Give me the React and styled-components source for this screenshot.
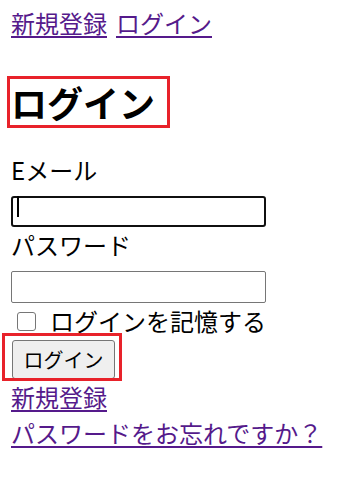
import React from "react"
import styled, { createGlobalStyle } from "styled-components"

const GlobalStyle = createGlobalStyle`
    body {
        margin: 0;
        background: #ffffff;
        color: #000000;
        font-family: "Noto Sans CJK JP", "Noto Sans", sans-serif;
        font-size: 24px;
        line-height: 36px;
    }
`

const Page = styled.div`
    padding: 5px 11px 20px;
`

const Nav = styled.div`
    display: flex;
    gap: 9px;
    height: 36px;
`

const Link = styled.a`
    color: #551a8b;
    text-decoration: underline;
    text-decoration-thickness: 2px;
    text-underline-offset: 3px;
    cursor: pointer;
`

// red annotation frame lies over the element, so it is drawn as an overlay
const Heading = styled.h1`
    position: relative;
    width: fit-content;
    margin: 38px 0 27px;
    font-size: 36px;
    line-height: 46px;
    font-weight: 700;

    &::after {
        content: "";
        position: absolute;
        left: -4px;
        top: -3px;
        right: -15px;
        bottom: -3px;
        border: 3px solid #e8222a;
    }
`

const Form = styled.form`
    display: flex;
    flex-direction: column;
    align-items: flex-start;
`

const Label = styled.label`
    display: block;
    height: 36px;
`

const InputWrap = styled.div`
    position: relative;
    margin-top: ${(p) => p.$top}px;
`

const Input = styled.input`
    box-sizing: border-box;
    width: 255px;
    height: ${(p) => (p.$focused ? 31 : 32)}px;
    margin: 0;
    padding: 0 6px;
    font: inherit;
    font-size: 20px;
    background: #ffffff;
    border: ${(p) => (p.$focused ? "2px solid #101010" : "1px solid #767676")};
    border-radius: ${(p) => (p.$focused ? 3 : 2)}px;
    outline: none;
    caret-color: transparent;
`

const Caret = styled.span`
    position: absolute;
    left: 6px;
    top: 5px;
    width: 2px;
    height: 21px;
    background: #000000;
`

const CheckRow = styled.label`
    display: flex;
    align-items: center;
    height: 36px;
`

const Check = styled.input`
    appearance: none;
    box-sizing: border-box;
    width: 19px;
    height: 19px;
    margin: 0 14px 0 6px;
    border: 1px solid #767676;
    border-radius: 3px;
    background: #ffffff;
`

const ButtonFrame = styled.div`
    position: relative;
    margin-top: 1px;
    display: flex;

    &::after {
        content: "";
        position: absolute;
        left: -9px;
        top: -7px;
        right: -7px;
        bottom: -2px;
        border: 3px solid #e8222a;
        pointer-events: none;
    }
`

const Button = styled.button`
    box-sizing: border-box;
    width: 103px;
    height: 39px;
    margin: 0 0 0 1px;
    padding: 0 9px;
    font-family: inherit;
    font-size: 20px;
    line-height: 1;
    color: #000000;
    background: #efefef;
    border: 1px solid #767676;
    border-radius: 3px;
`

const LinkLine = styled.div`
    height: 36px;
`

const App = () => {
    return (
        <Page>
            <GlobalStyle />
            <Nav>
                <Link>新規登録</Link>
                <Link>ログイン</Link>
            </Nav>

            <Heading>ログイン</Heading>

            <Form onSubmit={(e) => e.preventDefault()}>
                <Label htmlFor="email">Eメール</Label>
                <InputWrap $top={3}>
                    <Input id="email" type="email" $focused />
                    <Caret />
                </InputWrap>

                <Label htmlFor="password">パスワード</Label>
                <InputWrap $top={4}>
                    <Input id="password" type="password" />
                </InputWrap>

                <CheckRow>
                    <Check type="checkbox" />
                    ログインを記憶する
                </CheckRow>

                <ButtonFrame>
                    <Button type="submit">ログイン</Button>
                </ButtonFrame>

                <LinkLine>
                    <Link>新規登録</Link>
                </LinkLine>
                <LinkLine>
                    <Link>パスワードをお忘れですか？</Link>
                </LinkLine>
            </Form>
        </Page>
    )
}

export default App
